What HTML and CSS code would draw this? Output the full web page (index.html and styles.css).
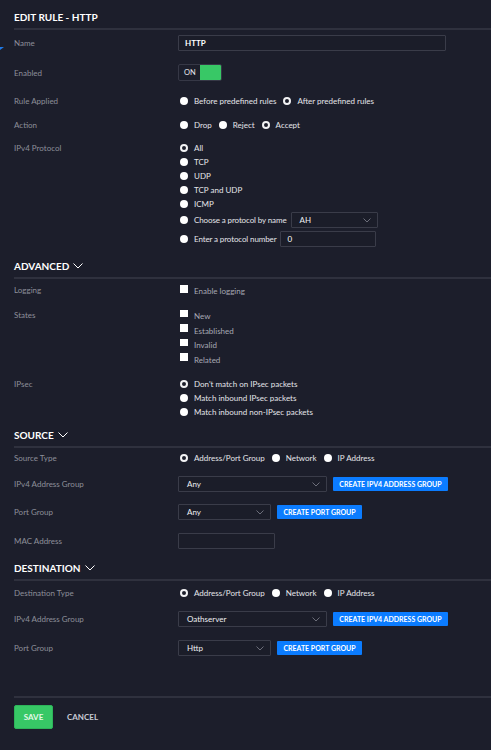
FILE: index.html
```html
<!DOCTYPE html>
<html lang="en">
<head>
    <meta charset="UTF-8">
    <meta name="viewport" content="width=device-width, initial-scale=1.0">
    <title>Edit Rule - HTTP</title>
    <link rel="stylesheet" href="styles.css">
</head>
<body>
    <div class="edge-marker"></div>

    <form class="rule-form">
        <h2 class="section-title">EDIT RULE - HTTP</h2>

        <div class="row after-head">
            <span class="label">Name</span>
            <input class="text-input name-input" type="text" value="HTTP">
        </div>

        <div class="row">
            <span class="label">Enabled</span>
            <div class="toggle"><span class="toggle-text">ON</span><span class="toggle-knob"></span></div>
        </div>

        <div class="row">
            <span class="label">Rule Applied</span>
            <div class="inline-options">
                <span class="option"><span class="radio"></span>Before predefined rules</span>
                <span class="option"><span class="radio checked"></span>After predefined rules</span>
            </div>
        </div>

        <div class="row gap-10">
            <span class="label">Action</span>
            <div class="inline-options">
                <span class="option"><span class="radio"></span>Drop</span>
                <span class="option"><span class="radio"></span>Reject</span>
                <span class="option"><span class="radio checked"></span>Accept</span>
            </div>
        </div>

        <div class="row top gap-9">
            <span class="label">IPv4 Protocol</span>
            <div class="options">
                <span class="option"><span class="radio checked"></span>All</span>
                <span class="option"><span class="radio"></span>TCP</span>
                <span class="option"><span class="radio"></span>UDP</span>
                <span class="option"><span class="radio"></span>TCP and UDP</span>
                <span class="option"><span class="radio"></span>ICMP</span>
                <span class="option field-option choose">
                    <span class="radio"></span><span class="tight">Choose a protocol by name</span>
                    <span class="select proto-select">AH
                        <svg class="caret" width="8" height="5" viewBox="0 0 8 5"><polyline points="0.5,0.5 4,4 7.5,0.5" fill="none" stroke="#6c6e7a" stroke-width="1"/></svg>
                    </span>
                </span>
                <span class="option field-option enter">
                    <span class="radio"></span><span class="tight">Enter a protocol number</span>
                    <input class="text-input number-input" type="text" value="0">
                </span>
            </div>
        </div>

        <h2 class="section-title collapsible">ADVANCED
            <svg width="10" height="6" viewBox="0 0 10 6"><polyline points="0.5,0.5 5,5 9.5,0.5" fill="none" stroke="#ffffff" stroke-width="1"/></svg>
        </h2>

        <div class="row top after-adv">
            <span class="label">Logging</span>
            <div class="options">
                <span class="option check-option"><span class="checkbox"></span><span class="check-text">Enable logging</span></span>
            </div>
        </div>

        <div class="row top gap-11">
            <span class="label">States</span>
            <div class="options states">
                <span class="option check-option"><span class="checkbox"></span><span class="check-text">New</span></span>
                <span class="option check-option"><span class="checkbox"></span><span class="check-text">Established</span></span>
                <span class="option check-option"><span class="checkbox"></span><span class="check-text">Invalid</span></span>
                <span class="option check-option"><span class="checkbox"></span><span class="check-text">Related</span></span>
            </div>
        </div>

        <div class="row top gap-11">
            <span class="label">IPsec</span>
            <div class="options">
                <span class="option"><span class="radio checked"></span>Don't match on IPsec packets</span>
                <span class="option"><span class="radio"></span>Match inbound IPsec packets</span>
                <span class="option"><span class="radio"></span>Match inbound non-IPsec packets</span>
            </div>
        </div>

        <h2 class="section-title collapsible gap-9">SOURCE
            <svg width="10" height="6" viewBox="0 0 10 6"><polyline points="0.5,0.5 5,5 9.5,0.5" fill="none" stroke="#ffffff" stroke-width="1"/></svg>
        </h2>

        <div class="row after-head-type">
            <span class="label">Source Type</span>
            <div class="inline-options">
                <span class="option"><span class="radio checked"></span>Address/Port Group</span>
                <span class="option"><span class="radio"></span>Network</span>
                <span class="option"><span class="radio"></span>IP Address</span>
            </div>
        </div>

        <div class="row gap-11">
            <span class="label">IPv4 Address Group</span>
            <div class="field-group">
                <span class="select wide-select">Any
                    <svg class="caret" width="8" height="5" viewBox="0 0 8 5"><polyline points="0.5,0.5 4,4 7.5,0.5" fill="none" stroke="#6c6e7a" stroke-width="1"/></svg>
                </span>
                <button class="btn-create wide-btn" type="button">CREATE IPV4 ADDRESS GROUP</button>
            </div>
        </div>

        <div class="row gap-12">
            <span class="label">Port Group</span>
            <div class="field-group">
                <span class="select narrow-select">Any
                    <svg class="caret" width="8" height="5" viewBox="0 0 8 5"><polyline points="0.5,0.5 4,4 7.5,0.5" fill="none" stroke="#6c6e7a" stroke-width="1"/></svg>
                </span>
                <button class="btn-create" type="button">CREATE PORT GROUP</button>
            </div>
        </div>

        <div class="row">
            <span class="label">MAC Address</span>
            <input class="text-input mac-input" type="text" value="">
        </div>

        <h2 class="section-title collapsible">DESTINATION
            <svg width="10" height="6" viewBox="0 0 10 6"><polyline points="0.5,0.5 5,5 9.5,0.5" fill="none" stroke="#ffffff" stroke-width="1"/></svg>
        </h2>

        <div class="row after-dest">
            <span class="label">Destination Type</span>
            <div class="inline-options">
                <span class="option"><span class="radio checked"></span>Address/Port Group</span>
                <span class="option"><span class="radio"></span>Network</span>
                <span class="option"><span class="radio"></span>IP Address</span>
            </div>
        </div>

        <div class="row gap-11">
            <span class="label">IPv4 Address Group</span>
            <div class="field-group">
                <span class="select wide-select">Oathserver
                    <svg class="caret" width="8" height="5" viewBox="0 0 8 5"><polyline points="0.5,0.5 4,4 7.5,0.5" fill="none" stroke="#6c6e7a" stroke-width="1"/></svg>
                </span>
                <button class="btn-create wide-btn" type="button">CREATE IPV4 ADDRESS GROUP</button>
            </div>
        </div>

        <div class="row">
            <span class="label">Port Group</span>
            <div class="field-group">
                <span class="select narrow-select">Http
                    <svg class="caret" width="8" height="5" viewBox="0 0 8 5"><polyline points="0.5,0.5 4,4 7.5,0.5" fill="none" stroke="#6c6e7a" stroke-width="1"/></svg>
                </span>
                <button class="btn-create" type="button">CREATE PORT GROUP</button>
            </div>
        </div>

        <div class="form-footer">
            <button class="btn-save" type="button">SAVE</button>
            <button class="btn-cancel" type="button">CANCEL</button>
        </div>
    </form>
</body>
</html>
```

FILE: styles.css
```css
body, html {
    margin: 0;
    background: #1c1e2b;
    font-family: 'Lato', 'Open Sans', sans-serif;
    color: #e2e3e8;
}
.edge-marker {
    position: absolute;
    left: 0;
    top: 47px;
    width: 0;
    height: 0;
    border-left: 4px solid #1f7ae8;
    border-bottom: 3px solid transparent;
}
.rule-form {
    padding-left: 14px;
}
.section-title {
    margin: 0;
    padding: 10px 0 4px;
    font-size: 10px;
    line-height: 14px;
    font-weight: bold;
    color: #ffffff;
    border-bottom: 2px solid #2f313e;
    display: flex;
    align-items: center;
    gap: 4px;
}
.section-title.collapsible {
    margin-top: 12px;
    padding-top: 0;
}
.section-title.gap-9 { margin-top: 9px; }

.row {
    display: grid;
    grid-template-columns: 164px auto;
    align-items: center;
    justify-items: start;
    margin-top: 13px;
}
.row.top { align-items: start; }
.row.after-head { margin-top: 5px; }
.row.after-adv { margin-top: 4px; }
.row.after-head-type { margin-top: 3px; }
.row.after-dest { margin-top: 5px; }
.row.gap-9 { margin-top: 9px; }
.row.gap-10 { margin-top: 10px; }
.row.gap-11 { margin-top: 11px; }
.row.gap-12 { margin-top: 12px; }

.label {
    font-size: 8px;
    line-height: 14px;
    color: #8d8f9a;
}

.text-input {
    box-sizing: border-box;
    height: 16px;
    margin: 0;
    border: 1px solid #3a3c49;
    border-radius: 1px;
    background: #1b1d29;
    color: #ffffff;
    font-family: inherit;
    font-size: 8px;
    font-weight: bold;
    padding: 0 6px;
    outline: none;
}
.name-input { width: 268px; }
.mac-input { width: 97px; }
.number-input {
    width: 96px;
    margin-left: -2px;
    font-weight: normal;
}

.toggle {
    display: flex;
    box-sizing: border-box;
    width: 44px;
    height: 17px;
    border: 1px solid #363846;
    border-radius: 2px;
    overflow: hidden;
}
.toggle-text {
    width: 21px;
    font-size: 7.5px;
    line-height: 15px;
    padding-left: 5px;
    box-sizing: border-box;
    color: #e8e9ee;
}
.toggle-knob {
    flex: 1;
    margin: -1px -1px -1px 0;
    background: #38c866;
}

.options {
    display: flex;
    flex-direction: column;
    padding-left: 2px;
}
.inline-options {
    display: flex;
    gap: 7px;
    padding-left: 2px;
}
.option {
    display: flex;
    align-items: center;
    gap: 6px;
    height: 14px;
    font-size: 8px;
    color: #e4e5ea;
    white-space: nowrap;
}
.tight { letter-spacing: -0.12px; }
.radio {
    box-sizing: border-box;
    width: 8px;
    height: 8px;
    border-radius: 50%;
    background: #ffffff;
}
.radio.checked {
    background: #1c1e2b;
    border: 2px solid #f2f2f4;
}
.field-option.choose {
    height: 16px;
    margin-top: 1px;
}
.field-option.enter {
    height: 16px;
    margin-top: 3px;
}

.check-option {
    align-items: flex-start;
}
.states .check-option { height: 14.5px; }
.checkbox {
    width: 8px;
    height: 7.5px;
    margin-top: 2px;
    background: #ffffff;
}
.states .checkbox { margin-top: 1.5px; }
.check-text {
    padding-top: 1px;
    line-height: 14px;
    color: #a6a8b3;
}

.select {
    display: flex;
    justify-content: space-between;
    align-items: center;
    box-sizing: border-box;
    height: 16px;
    border: 1px solid #3a3c49;
    border-radius: 1px;
    padding: 0 6px 0 8px;
    font-size: 8px;
    color: #eeeff2;
    background: #1b1d29;
}
.proto-select {
    width: 87px;
    margin-left: -2px;
}
.wide-select { width: 149px; }
.narrow-select { width: 93px; }

.field-group {
    display: flex;
    align-items: center;
    gap: 6px;
}
.btn-create {
    box-sizing: border-box;
    width: 85px;
    height: 14px;
    padding: 0;
    border: none;
    border-radius: 1px;
    background: #0b7cff;
    color: #ffffff;
    font-family: inherit;
    font-size: 7px;
    font-weight: bold;
}
.btn-create.wide-btn { width: 115px; }

.form-footer {
    display: flex;
    align-items: center;
    gap: 14px;
    margin-top: 40px;
    padding-top: 7px;
    border-top: 2px solid #2f313e;
}
.btn-save {
    width: 39px;
    height: 24px;
    padding: 0;
    border: 1px solid #2db45a;
    border-radius: 2px;
    background: #37c866;
    color: #e3f8e9;
    font-family: inherit;
    font-size: 8px;
    font-weight: bold;
}
.btn-cancel {
    padding: 0;
    border: none;
    background: none;
    color: #c9cbd6;
    font-family: inherit;
    font-size: 8px;
    font-weight: bold;
}
```
